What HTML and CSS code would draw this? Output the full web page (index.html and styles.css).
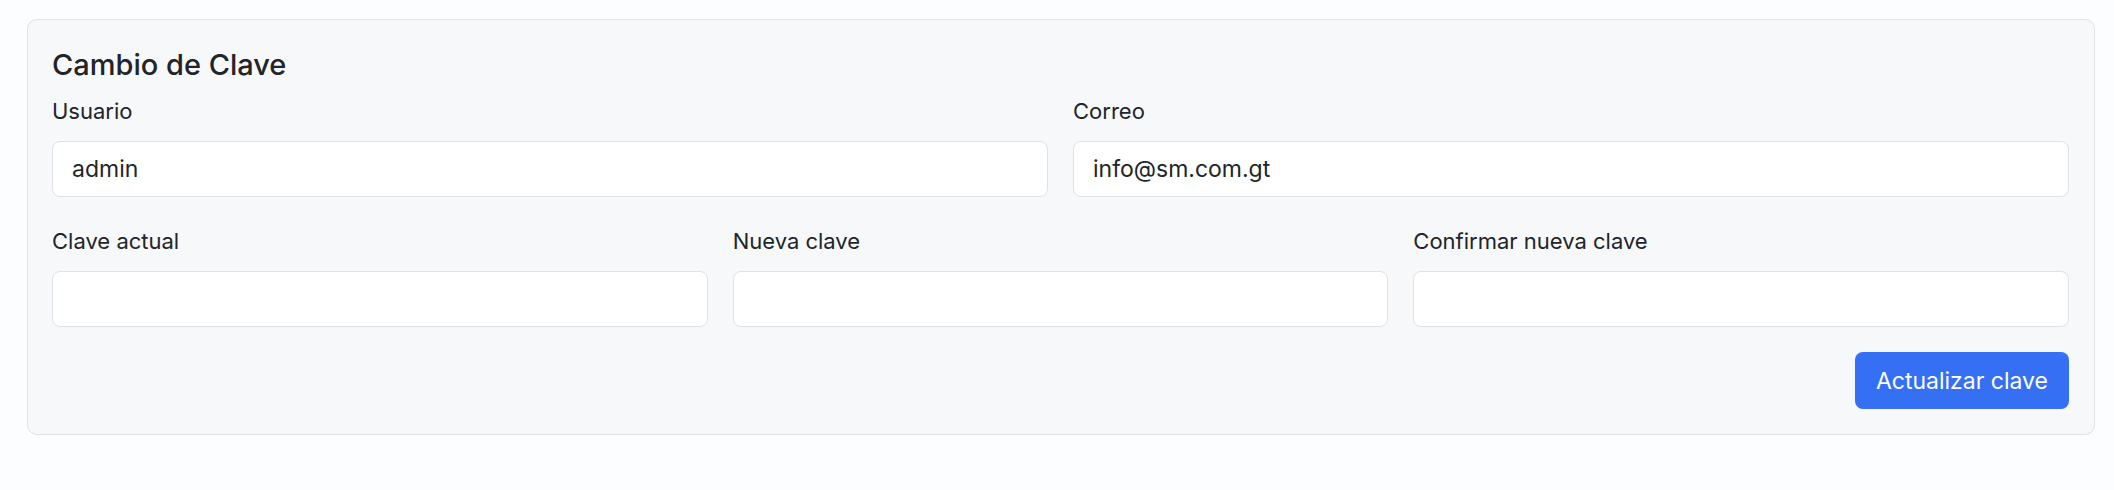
FILE: index.html
```html
<!DOCTYPE html>
<html lang="es">
<head>
<meta charset="utf-8">
<title>Cambio de Clave</title>
<link rel="stylesheet" href="styles.css">
</head>
<body>
<div class="page">
  <section class="card">
    <h5 class="card-title">Cambio de Clave</h5>
    <div class="row row-2">
      <div class="field">
        <label class="label">Usuario</label>
        <input class="input" type="text" value="admin">
      </div>
      <div class="field">
        <label class="label">Correo</label>
        <input class="input" type="text" value="info@sm.com.gt">
      </div>
    </div>
    <div class="row row-3">
      <div class="field">
        <label class="label">Clave actual</label>
        <input class="input" type="password">
      </div>
      <div class="field">
        <label class="label">Nueva clave</label>
        <input class="input" type="password">
      </div>
      <div class="field">
        <label class="label">Confirmar nueva clave</label>
        <input class="input" type="password">
      </div>
    </div>
    <div class="actions">
      <button class="btn" type="button">Actualizar clave</button>
    </div>
  </section>
</div>
</body>
</html>
```

FILE: styles.css
```css
* { box-sizing: border-box; }
html, body { margin: 0; padding: 0; }
body {
  background: #fcfdfe;
  font-family: Inter, "Noto Sans", "Liberation Sans", sans-serif;
  color: #212529;
}
.page {
  padding: 19px 0 0 27px;
}
.card {
  width: 2068px;
  background: #f7f8fa;
  border: 1px solid #dfe1e5;
  border-radius: 10px;
  padding: 28px 25px 25px 24px;
}
.card-title {
  margin: 0 0 14px 0;
  font-size: 29px;
  line-height: 34px;
  font-weight: 500;
  color: #212529;
}
.row {
  display: grid;
  column-gap: 25px;
}
.row-2 { grid-template-columns: 1fr 1fr; }
.row-3 { grid-template-columns: 1fr 1fr 1fr; margin-top: 29px; }
.field {
  display: flex;
  flex-direction: column;
}
.label {
  font-size: 22px;
  line-height: 31px;
  margin-bottom: 14px;
  color: #212529;
}
.input {
  height: 56px;
  width: 100%;
  border: 1px solid #dee1e6;
  border-radius: 8px;
  background: #ffffff;
  padding: 0 19px;
  font-family: inherit;
  font-size: 23px;
  color: #212529;
  outline: none;
}
.actions {
  display: flex;
  justify-content: flex-end;
  margin-top: 25px;
}
.btn {
  height: 57px;
  padding: 0 21px;
  border: none;
  border-radius: 8px;
  background: #346ff4;
  color: #ffffff;
  font-family: inherit;
  font-size: 23px;
  font-weight: 400;
  cursor: pointer;
}
```
